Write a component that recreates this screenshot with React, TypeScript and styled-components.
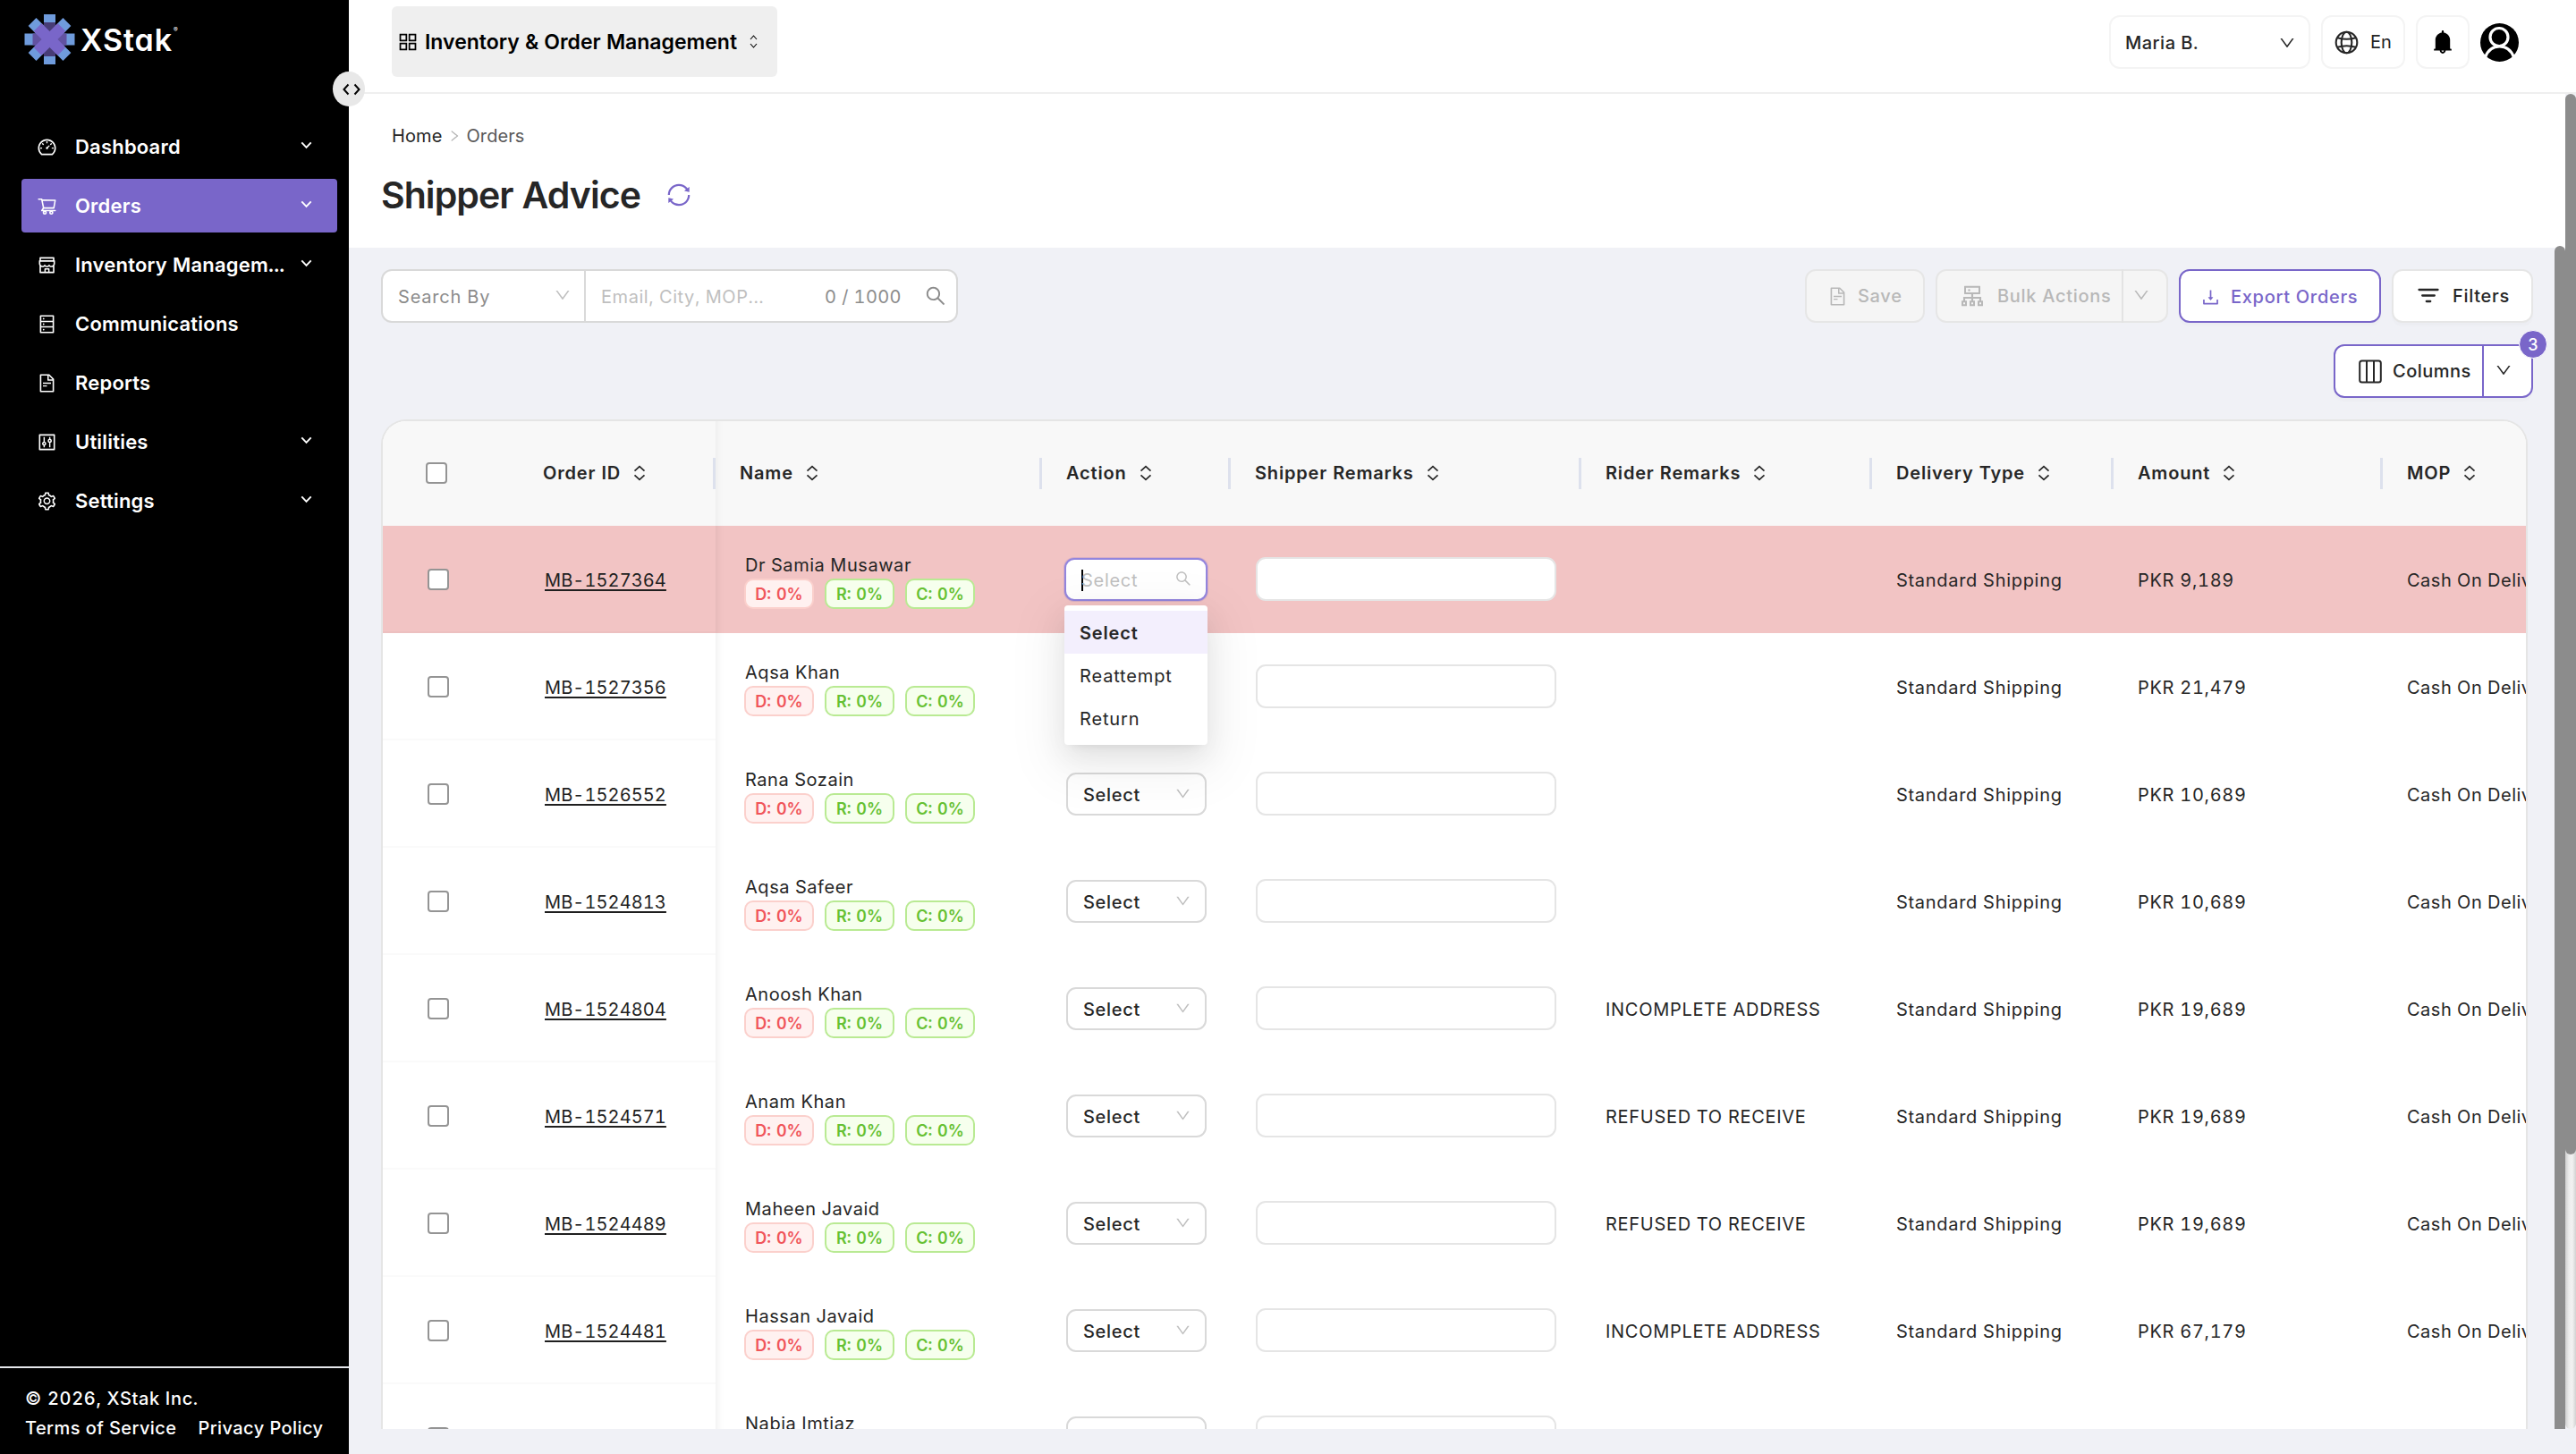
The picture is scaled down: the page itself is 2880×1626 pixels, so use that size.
import { ReactNode, useState } from 'react';
import {
	AiFillBell,
	AiOutlineAppstore,
	AiOutlineCluster,
	AiOutlineControl,
	AiOutlineDashboard,
	AiOutlineDatabase,
	AiOutlineDown,
	AiOutlineDownload,
	AiOutlineFileText,
	AiOutlineRight,
	AiOutlineSearch,
	AiOutlineSetting,
	AiOutlineShop,
	AiOutlineShoppingCart,
	AiOutlineSync,
} from 'react-icons/ai';
import styled, { createGlobalStyle, css } from 'styled-components';

const PURPLE = '#7966c9';
const TABLE_COLUMNS = '154px 218px 365px 211px 392px 325px 270px 301px 301px';

const GlobalStyle = createGlobalStyle`
	*, *::before, *::after {
		box-sizing: border-box;
	}
	body {
		margin: 0;
		background: #f0f1f6;
		color: #262626;
		font-family: Inter, 'Liberation Sans', sans-serif;
		font-size: 20px;
		font-variant-numeric: tabular-nums;
		overflow: hidden;
	}
	button, input {
		font: inherit;
		letter-spacing: inherit;
		color: inherit;
	}
	svg {
		display: block;
		flex: none;
	}
`;

const StyledLayout = styled.div`
	display: flex;
	height: 1626px;
`;

/* sidebar */
const StyledSidebar = styled.aside`
	position: relative;
	display: flex;
	flex-direction: column;
	width: 390px;
	flex: none;
	background: #000;
	color: #fff;
`;
const StyledLogo = styled.div`
	display: flex;
	align-items: center;
	height: 88px;
	padding-left: 27px;
`;
const StyledLogoText = styled.span`
	margin-left: 6px;
	font-size: 34px;
	font-weight: 600;
	letter-spacing: 0.9px;
	font-feature-settings: 'cv11';
`;
const StyledLogoMark = styled.sup`
	align-self: flex-start;
	margin: 29px 0 0 1px;
	font-size: 7px;
	line-height: 9px;
`;
const StyledCollapse = styled.button`
	position: absolute;
	top: 80px;
	right: -18px;
	display: flex;
	align-items: center;
	justify-content: center;
	width: 36px;
	height: 39px;
	padding: 0 0 0 5px;
	border: 0;
	border-radius: 50%;
	background: #e8e8e8;
	color: #000;
`;
const StyledMenu = styled.ul`
	display: flex;
	flex-direction: column;
	flex: 1;
	gap: 6px;
	margin: 46px 13px 0 24px;
	padding: 0;
	list-style: none;
`;
const StyledMenuItem = styled.li<{ $active?: boolean }>`
	display: flex;
	align-items: center;
	height: 60px;
	padding: 0 28px 0 17px;
	border-radius: 4px;
	background: ${({ $active }) => ($active ? PURPLE : 'transparent')};
	font-size: 22px;
	font-weight: 600;
	letter-spacing: 0.2px;
`;
const StyledMenuLabel = styled.span`
	flex: 1;
	margin-left: 20px;
	white-space: nowrap;
`;
const StyledMenuArrow = styled.svg`
	margin-bottom: 4px;
`;
const StyledSidebarFooter = styled.footer`
	display: grid;
	grid-template-columns: auto 1fr;
	column-gap: 24px;
	height: 98px;
	padding: 18px 28px 0;
	border-top: 2px solid #e5e7eb;
	font-weight: 500;
	line-height: 33px;
	letter-spacing: 0.42px;
	align-content: start;
	white-space: nowrap;
`;
const StyledCopyright = styled.span`
	grid-column: 1 / -1;
	letter-spacing: 0.65px;
`;

/* top bar */
const StyledMain = styled.main`
	display: flex;
	flex-direction: column;
	flex: 1;
	min-width: 0;
`;
const StyledTopBar = styled.header`
	display: flex;
	align-items: flex-start;
	justify-content: space-between;
	height: 105px;
	padding: 7px 64px 0 48px;
	border-bottom: 2px solid #efefef;
	background: #fff;
`;
const StyledModule = styled.button`
	display: flex;
	align-items: center;
	width: 431px;
	height: 79px;
	padding: 0 0 0 5px;
	border: 0;
	border-radius: 6px;
	background: #efefef;
	color: #000;
	font-size: 23px;
	font-weight: 600;
`;
const StyledModuleLabel = styled.span`
	margin: 0 14px 0 6px;
`;
const StyledTopActions = styled.div`
	display: flex;
	align-items: center;
	gap: 12px;
	padding-top: 10px;
`;
const StyledTopBox = styled.div<{ $width: number }>`
	display: flex;
	align-items: center;
	justify-content: center;
	width: ${({ $width }) => $width}px;
	height: 60px;
	border: 2px solid #f4f4f4;
	border-radius: 12px;
	letter-spacing: 0.5px;
`;
const StyledUserBox = styled(StyledTopBox)`
	justify-content: space-between;
	padding: 1px 14px 0 16px;
	font-weight: 500;
`;
const StyledLanguage = styled.span`
	margin-left: 13px;
	letter-spacing: 0;
`;

/* page */
const StyledBody = styled.div`
	display: flex;
	height: 1493px;
`;
const StyledContent = styled.div`
	flex: 1;
	min-width: 0;
`;
const StyledPageHead = styled.div`
	height: 172px;
	padding: 35px 36px 0;
	background: #fff;
`;
const StyledBreadcrumb = styled.nav`
	display: flex;
	align-items: center;
	height: 24px;
	padding-left: 12px;
	letter-spacing: 0.1px;
`;
const StyledCrumb = styled.span<{ $current?: boolean }>`
	color: ${({ $current }) => ($current ? '#595959' : '#262626')};
`;
const StyledCrumbArrow = styled(AiOutlineRight)`
	margin: 0 5px 0 6px;
	color: #b5b5b5;
`;
const StyledTitleRow = styled.div`
	display: flex;
	align-items: center;
	height: 50px;
	margin-top: 29px;
`;
const StyledTitle = styled.h1`
	margin: 0 28px 0 0;
	font-size: 41px;
	font-weight: 600;
	letter-spacing: -0.95px;
`;
const StyledPanel = styled.div`
	display: flex;
	height: 1321px;
`;
const StyledPanelInner = styled.div`
	display: flex;
	flex-direction: column;
	flex: 1;
	min-width: 0;
	padding: 24px 24px 0 36px;
`;
const StyledInnerScroll = styled.div`
	width: 12px;
	margin-top: -2px;
	border-radius: 6px 6px 0 0;
	background: #8c8c8c;
`;
const StyledOuterTrack = styled.div`
	width: 12px;
	border-radius: 6px;
	background: linear-gradient(90deg, #cfcfcf, #ededed 35%, #f2f2f2 65%, #d2d2d2);
`;
const StyledOuterThumb = styled.div`
	height: 1186px;
	border-radius: 6px;
	background: #8c8c8c;
`;

/* toolbar */
const StyledToolbar = styled.div`
	display: flex;
	justify-content: space-between;
	height: 60px;
`;
const StyledSearch = styled.div`
	display: flex;
	align-items: center;
	width: 645px;
	border: 2px solid #d9d9d9;
	border-radius: 12px;
	background: #fff;
	color: #8c8c8c;
`;
const StyledSearchBy = styled.div`
	display: flex;
	align-items: center;
	justify-content: space-between;
	width: 227px;
	height: 100%;
	padding: 1px 14px 0 17px;
	border-right: 2px solid #d9d9d9;
	letter-spacing: 0.8px;

	svg {
		margin-bottom: 3px;
		color: #bfbfbf;
	}
`;
const StyledSearchInput = styled.input`
	flex: 1;
	min-width: 0;
	padding: 2px 0 0 17px;
	border: 0;
	outline: 0;
	background: transparent;
	letter-spacing: 0.55px;

	&::placeholder {
		color: #bfbfbf;
	}
`;
const StyledCounter = styled.span`
	margin-right: 25px;
	padding-top: 2px;
	letter-spacing: 0.4px;
`;
const StyledSearchIcon = styled(AiOutlineSearch)`
	margin-right: 10px;
`;
const StyledActions = styled.div`
	display: flex;
	gap: 12px;
`;
const StyledButton = styled.button<{ $tone?: 'disabled' | 'outline'; $width: number }>`
	display: flex;
	align-items: center;
	gap: 11px;
	width: ${({ $width }) => $width}px;
	height: 60px;
	padding: 0 0 0 23px;
	border: 2px solid #e6e6e6;
	border-radius: 12px;
	background: #fff;
	font-weight: 500;
	letter-spacing: 0.7px;
	white-space: nowrap;
	box-shadow: 0 4px 2px rgba(0, 0, 0, 0.016);

	${({ $tone }) =>
		$tone === 'disabled' &&
		css`
			background: #f5f5f5;
			color: #b8b8b8;
			box-shadow: none;
		`}
	${({ $tone }) =>
		$tone === 'outline' &&
		css`
			padding: 2px 0 0 22px;
			border-color: ${PURPLE};
			color: ${PURPLE};
		`}
`;
const StyledFilterButton = styled(StyledButton)`
	padding-left: 27px;
	gap: 15px;
`;
const StyledSplitButton = styled(StyledButton)`
	gap: 12px;
`;
const StyledSplitArrow = styled.span<{ $outlined?: boolean }>`
	display: flex;
	align-items: center;
	justify-content: center;
	width: ${({ $outlined }) => ($outlined ? 55 : 53)}px;
	height: 60px;
	margin: -2px 0 -2px auto;
	padding: 0 9px 3px 0;
	border-left: 2px solid ${({ $outlined }) => ($outlined ? PURPLE : '#e3e3e3')};
`;
const StyledColumnsRow = styled.div`
	display: flex;
	justify-content: flex-end;
	margin: 24px 0;
`;
const StyledColumns = styled.div`
	position: relative;
`;
const StyledColumnsButton = styled(StyledSplitButton)`
	padding-left: 26px;
	border-color: ${PURPLE};
	letter-spacing: 0.5px;
`;
const StyledBadge = styled.span`
	position: absolute;
	top: -16px;
	right: -16px;
	width: 32px;
	height: 32px;
	border: 1px solid #fff;
	border-radius: 50%;
	background: ${PURPLE};
	color: #fff;
	font-size: 18px;
	font-weight: 500;
	line-height: 31px;
	text-align: center;
`;

/* table */
const StyledTable = styled.div`
	flex: 1;
	min-height: 0;
	width: 2400px;
	overflow: hidden;
	border: 2px solid #e5e5e5;
	border-bottom: 0;
	border-radius: 28px 28px 0 0;
	background: #fff;
	letter-spacing: 0.7px;
`;
const StyledHeadRow = styled.div`
	display: grid;
	grid-template-columns: ${TABLE_COLUMNS};
	height: 117px;
	background: #f8f8f8;
	font-weight: 600;
	letter-spacing: 0.82px;
`;
const StyledRow = styled.div<{ $highlight: boolean }>`
	display: grid;
	grid-template-columns: ${TABLE_COLUMNS};
	height: 120px;
	background: ${({ $highlight }) => ($highlight ? '#f2c4c4' : '#fff')};
`;
const StyledCell = styled.div`
	position: relative;
	display: flex;
	align-items: center;
	padding: 2px 0 0 27px;
	white-space: nowrap;
`;
const StyledHeadCell = styled(StyledCell)`
	gap: 14px;
	padding: 0 0 2px 27px;

	&::after {
		content: '';
		position: absolute;
		top: 41px;
		right: 0;
		width: 3px;
		height: 35px;
		background: #dde1ed;
	}
`;
const StyledOrderHead = styled(StyledHeadCell)`
	padding-left: 25px;
`;
const StyledCheckCell = styled(StyledCell)<{ $head?: boolean }>`
	padding: ${({ $head }) => ($head ? '0 0 2px 48px' : '2px 0 0 50px')};
	border-bottom: ${({ $head }) => ($head ? '0' : '2px solid rgba(0, 0, 0, 0.02)')};
`;
const StyledCheckbox = styled.input`
	appearance: none;
	width: 24px;
	height: 24px;
	margin: 0;
	border: 2.5px solid #949494;
	border-radius: 4px;
	background: #fff;
`;
const StyledOrderCell = styled(StyledCell)`
	padding: 3px 0 0 27px;
	border-bottom: 2px solid rgba(0, 0, 0, 0.02);
`;
const StyledNameCell = styled(StyledCell)`
	flex-direction: column;
	align-items: flex-start;
	padding: 32px 0 0 33px;
	box-shadow: inset 12px 0 8px -10px rgba(0, 0, 0, 0.07);
`;
const StyledNameHead = styled(StyledHeadCell)`
	box-shadow: inset 12px 0 8px -10px rgba(0, 0, 0, 0.05);
`;
const StyledMopCell = styled(StyledCell)`
	letter-spacing: 0.5px;
`;
const StyledOrderLink = styled.a`
	color: #1f1f1f;
	letter-spacing: 0.1px;
	text-decoration: underline;
	text-decoration-thickness: 2px;
	text-underline-offset: 3px;
`;
const StyledName = styled.span`
	line-height: 24px;
	letter-spacing: 0.55px;
`;
const StyledTags = styled.div`
	display: flex;
	gap: 12px;
	margin: 3px 0 0 -1px;
`;
const StyledTag = styled.span<{ $danger?: boolean }>`
	width: 78px;
	height: 34px;
	border: 2px solid ${({ $danger }) => ($danger ? '#fbd0cc' : '#b9ea93')};
	border-radius: 10px;
	background: ${({ $danger }) => ($danger ? '#fff1f0' : '#f6ffed')};
	color: ${({ $danger }) => ($danger ? '#f0555a' : '#66c133')};
	font-size: 18px;
	font-weight: 600;
	line-height: 31px;
	letter-spacing: 0;
	word-spacing: 1px;
	text-align: center;
`;
const StyledSelect = styled.div<{ $open: boolean }>`
	display: flex;
	align-items: center;
	justify-content: space-between;
	width: 157px;
	height: 48px;
	margin-bottom: 2px;
	padding: 1px 15px 0 17px;
	border: 2px solid #d9d9d9;
	border-radius: 11px;
	background: #fff;
	font-weight: 500;

	svg {
		margin-bottom: 3px;
		color: #bfbfbf;
	}

	${({ $open }) =>
		$open &&
		css`
			width: 160px;
			margin-left: -2px;
			border-color: #9385dd;
			box-shadow: 0 0 0 1px rgba(121, 102, 201, 0.22);
			color: #bfbfbf;
			font-weight: 400;
		`}
`;
const StyledCaret = styled.span`
	width: 2px;
	height: 24px;
	margin-right: -2px;
	background: #000;
`;
const StyledSelectText = styled.span`
	flex: 1;
`;
const StyledDropdown = styled.ul`
	position: absolute;
	z-index: 2;
	top: 89px;
	left: 25px;
	width: 160px;
	height: 156px;
	margin: 0;
	padding: 6px 0 0;
	border-radius: 4px;
	background: #fff;
	box-shadow: 0 6px 12px -8px rgba(0, 0, 0, 0.12), 0 12px 32px rgba(0, 0, 0, 0.08),
		0 18px 56px 16px rgba(0, 0, 0, 0.05);
	list-style: none;
`;
const StyledOption = styled.li<{ $selected: boolean }>`
	height: 48px;
	padding-left: 17px;
	background: ${({ $selected }) => ($selected ? '#f3effd' : '#fff')};
	font-weight: ${({ $selected }) => ($selected ? 600 : 400)};
	line-height: 50px;
	letter-spacing: 0.85px;
`;
const StyledRemarks = styled.input`
	width: 336px;
	height: 49px;
	margin: 0 0 3px 1px;
	padding: 0 16px;
	border: 2px solid #e5e5e5;
	border-radius: 11px;
	background: #fff;
	outline: 0;
`;

interface MenuEntry {
	label: string;
	icon: ReactNode;
	expandable?: boolean;
}

const menu: MenuEntry[] = [
	{ label: 'Dashboard', icon: <AiOutlineDashboard size={23} />, expandable: true },
	{ label: 'Orders', icon: <AiOutlineShoppingCart size={23} />, expandable: true },
	{ label: 'Inventory Managem...', icon: <AiOutlineShop size={23} />, expandable: true },
	{ label: 'Communications', icon: <AiOutlineDatabase size={23} /> },
	{ label: 'Reports', icon: <AiOutlineFileText size={23} /> },
	{ label: 'Utilities', icon: <AiOutlineControl size={23} />, expandable: true },
	{ label: 'Settings', icon: <AiOutlineSetting size={23} />, expandable: true },
];

const headers = ['Action', 'Shipper Remarks', 'Rider Remarks', 'Delivery Type', 'Amount', 'MOP'];

interface Order {
	id: string;
	name: string;
	remarks: string;
	amount: string;
}

const orders: Order[] = [
	{ id: 'MB-1527364', name: 'Dr Samia Musawar', remarks: '', amount: 'PKR 9,189' },
	{ id: 'MB-1527356', name: 'Aqsa Khan', remarks: '', amount: 'PKR 21,479' },
	{ id: 'MB-1526552', name: 'Rana Sozain', remarks: '', amount: 'PKR 10,689' },
	{ id: 'MB-1524813', name: 'Aqsa Safeer', remarks: '', amount: 'PKR 10,689' },
	{ id: 'MB-1524804', name: 'Anoosh Khan', remarks: 'INCOMPLETE ADDRESS', amount: 'PKR 19,689' },
	{ id: 'MB-1524571', name: 'Anam Khan', remarks: 'REFUSED TO RECEIVE', amount: 'PKR 19,689' },
	{ id: 'MB-1524489', name: 'Maheen Javaid', remarks: 'REFUSED TO RECEIVE', amount: 'PKR 19,689' },
	{ id: 'MB-1524481', name: 'Hassan Javaid', remarks: 'INCOMPLETE ADDRESS', amount: 'PKR 67,179' },
	{ id: '', name: 'Nabia Imtiaz', remarks: '', amount: '' },
];

const options = ['Select', 'Reattempt', 'Return'];

function LogoIcon() {
	return (
		<svg width="57" height="56" viewBox="-28.5 -28 57 56">
			<g fill="#6f9bdc">
				<rect x="-6.5" y="-28" width="13" height="56" />
				<rect x="-28" y="-6.5" width="56" height="13" />
				<rect x="-6.3" y="-27.5" width="12.6" height="55" transform="rotate(45)" />
				<rect x="-6.3" y="-27.5" width="12.6" height="55" transform="rotate(-45)" />
			</g>
			<rect x="-6.5" y="-19" width="13" height="38" fill="#483c76" />
			<rect x="-19" y="-6.5" width="38" height="13" fill="#6252a1" />
			<g fill="#7966c9">
				<rect x="-6.3" y="-19" width="12.6" height="38" transform="rotate(45)" />
				<rect x="-6.3" y="-19" width="12.6" height="38" transform="rotate(-45)" />
			</g>
		</svg>
	);
}

function SortIcon() {
	return (
		<svg width="14" height="18" viewBox="0 0 14 18" fill="none" stroke="currentColor" strokeWidth="1.7">
			<path d="M1.5 6.6L7 1.6L12.5 6.6M1.5 11.4L7 16.4L12.5 11.4" />
		</svg>
	);
}

function SwitchIcon() {
	return (
		<svg width="9" height="15" viewBox="0 0 9 15" fill="none" stroke="currentColor" strokeWidth="1.1">
			<path d="M1 5L4.5 1L8 5M1 10L4.5 14L8 10" />
		</svg>
	);
}

function GlobeIcon() {
	return (
		<svg width="27" height="27" viewBox="0 0 27 27" fill="none" stroke="currentColor" strokeWidth="2.1">
			<circle cx="13.5" cy="13.5" r="11.8" />
			<ellipse cx="13.5" cy="13.5" rx="5.8" ry="11.8" />
			<path d="M3.2 8.2Q13.5 11.4 23.8 8.2M3.2 18.8Q13.5 15.6 23.8 18.8" />
		</svg>
	);
}

function AvatarIcon() {
	return (
		<svg width="43" height="43" viewBox="0 0 43 43">
			<circle cx="21.5" cy="21.5" r="21.5" fill="#000" />
			<circle cx="21" cy="15.5" r="10" fill="none" stroke="#fff" strokeWidth="3.2" />
			<path d="M5.5 38Q10 26 21.5 26Q33 26 37.5 38" fill="none" stroke="#fff" strokeWidth="3.2" />
		</svg>
	);
}

function FilterIcon() {
	return (
		<svg width="24" height="20" viewBox="0 0 24 20" stroke="currentColor" strokeWidth="2.3" strokeLinecap="round">
			<path d="M1.5 3H22.5M5.2 9.5H18.8M9.8 16H14.2" />
		</svg>
	);
}

function ColumnsIcon() {
	return (
		<svg width="26" height="27" viewBox="0 0 26 27" fill="none" stroke="currentColor" strokeWidth="2">
			<rect x="1.2" y="1.5" width="23.6" height="24" rx="2.5" />
			<path d="M9 1.5V25.5M17 1.5V25.5" />
		</svg>
	);
}

function Sidebar() {
	return (
		<StyledSidebar>
			<StyledLogo>
				<LogoIcon />
				<StyledLogoText>XStak</StyledLogoText>
				<StyledLogoMark>®</StyledLogoMark>
			</StyledLogo>
			<StyledCollapse type="button">
				<svg width="20" height="14" viewBox="0 0 20 14" fill="none" stroke="currentColor" strokeWidth="2">
					<path d="M6.5 1.5L1.5 7L6.5 12.5M13.5 1.5L18.5 7L13.5 12.5" />
				</svg>
			</StyledCollapse>
			<StyledMenu>
				{menu.map(({ label, icon, expandable }) => (
					<StyledMenuItem key={label} $active={label === 'Orders'}>
						{icon}
						<StyledMenuLabel>{label}</StyledMenuLabel>
						{expandable && (
							<StyledMenuArrow width="13" height="9" viewBox="0 0 14 10" fill="none" stroke="currentColor" strokeWidth="2.1">
								<path d="M1.2 1.5L7 7.6L12.8 1.5" />
							</StyledMenuArrow>
						)}
					</StyledMenuItem>
				))}
			</StyledMenu>
			<StyledSidebarFooter>
				<StyledCopyright>© 2026, XStak Inc.</StyledCopyright>
				<span>Terms of Service</span>
				<span>Privacy Policy</span>
			</StyledSidebarFooter>
		</StyledSidebar>
	);
}

function TopBar() {
	return (
		<StyledTopBar>
			<StyledModule type="button">
				<AiOutlineAppstore size={26} />
				<StyledModuleLabel>Inventory &amp; Order Management</StyledModuleLabel>
				<SwitchIcon />
			</StyledModule>
			<StyledTopActions>
				<StyledUserBox $width={225}>
					Maria B.
					<AiOutlineDown size={20} />
				</StyledUserBox>
				<StyledTopBox $width={94}>
					<GlobeIcon />
					<StyledLanguage>En</StyledLanguage>
				</StyledTopBox>
				<StyledTopBox $width={60}>
					<AiFillBell size={30} color="#000" />
				</StyledTopBox>
				<AvatarIcon />
			</StyledTopActions>
		</StyledTopBar>
	);
}

function Toolbar() {
	return (
		<>
			<StyledToolbar>
				<StyledSearch>
					<StyledSearchBy>
						Search By
						<AiOutlineDown size={20} />
					</StyledSearchBy>
					<StyledSearchInput placeholder="Email, City, MOP..." />
					<StyledCounter>0 / 1000</StyledCounter>
					<StyledSearchIcon size={26} />
				</StyledSearch>
				<StyledActions>
					<StyledButton type="button" $tone="disabled" $width={134}>
						<AiOutlineFileText size={23} />
						Save
					</StyledButton>
					<StyledSplitButton type="button" $tone="disabled" $width={260}>
						<AiOutlineCluster size={32} />
						Bulk Actions
						<StyledSplitArrow>
							<AiOutlineDown size={20} />
						</StyledSplitArrow>
					</StyledSplitButton>
					<StyledButton type="button" $tone="outline" $width={226}>
						<AiOutlineDownload size={23} />
						Export Orders
					</StyledButton>
					<StyledFilterButton type="button" $width={158}>
						<FilterIcon />
						Filters
					</StyledFilterButton>
				</StyledActions>
			</StyledToolbar>
			<StyledColumnsRow>
				<StyledColumns>
					<StyledColumnsButton type="button" $width={223}>
						<ColumnsIcon />
						Columns
						<StyledSplitArrow $outlined>
							<AiOutlineDown size={20} />
						</StyledSplitArrow>
					</StyledColumnsButton>
					<StyledBadge>3</StyledBadge>
				</StyledColumns>
			</StyledColumnsRow>
		</>
	);
}

interface OrderRowProps extends Order {
	open: boolean;
	onToggle: () => void;
}

function OrderRow({ id, name, remarks, amount, open, onToggle }: OrderRowProps) {
	return (
		<StyledRow $highlight={id === orders[0].id}>
			<StyledCheckCell>
				<StyledCheckbox type="checkbox" />
			</StyledCheckCell>
			<StyledOrderCell>
				<StyledOrderLink>{id}</StyledOrderLink>
			</StyledOrderCell>
			<StyledNameCell>
				<StyledName>{name}</StyledName>
				<StyledTags>
					<StyledTag $danger>D: 0%</StyledTag>
					<StyledTag>R: 0%</StyledTag>
					<StyledTag>C: 0%</StyledTag>
				</StyledTags>
			</StyledNameCell>
			<StyledCell>
				<StyledSelect $open={open} onClick={onToggle}>
					{open && <StyledCaret />}
					<StyledSelectText>Select</StyledSelectText>
					{open ? <AiOutlineSearch size={20} /> : <AiOutlineDown size={19} />}
				</StyledSelect>
				{open && (
					<StyledDropdown>
						{options.map((option) => (
							<StyledOption key={option} $selected={option === 'Select'}>
								{option}
							</StyledOption>
						))}
					</StyledDropdown>
				)}
			</StyledCell>
			<StyledCell>
				<StyledRemarks />
			</StyledCell>
			<StyledCell>{remarks}</StyledCell>
			<StyledCell>Standard Shipping</StyledCell>
			<StyledCell>{amount}</StyledCell>
			<StyledMopCell>Cash On Delivery</StyledMopCell>
		</StyledRow>
	);
}

export default function App() {
	const [openRow, setOpenRow] = useState<number | null>(0);

	return (
		<>
			<GlobalStyle />
			<StyledLayout>
				<Sidebar />
				<StyledMain>
					<TopBar />
					<StyledBody>
						<StyledContent>
							<StyledPageHead>
								<StyledBreadcrumb>
									<StyledCrumb>Home</StyledCrumb>
									<StyledCrumbArrow size={16} />
									<StyledCrumb $current>Orders</StyledCrumb>
								</StyledBreadcrumb>
								<StyledTitleRow>
									<StyledTitle>Shipper Advice</StyledTitle>
									<AiOutlineSync size={30} color={PURPLE} />
								</StyledTitleRow>
							</StyledPageHead>
							<StyledPanel>
								<StyledPanelInner>
									<Toolbar />
									<StyledTable>
										<StyledHeadRow>
											<StyledCheckCell $head>
												<StyledCheckbox type="checkbox" />
											</StyledCheckCell>
											<StyledOrderHead>
												Order ID <SortIcon />
											</StyledOrderHead>
											<StyledNameHead>
												Name <SortIcon />
											</StyledNameHead>
											{headers.map((header) => (
												<StyledHeadCell key={header}>
													{header} <SortIcon />
												</StyledHeadCell>
											))}
										</StyledHeadRow>
										{orders.map((order, index) => (
											<OrderRow
												key={`order-${index}`}
												{...order}
												open={openRow === index}
												onToggle={() => setOpenRow(openRow === index ? null : index)}
											/>
										))}
									</StyledTable>
								</StyledPanelInner>
								<StyledInnerScroll />
							</StyledPanel>
						</StyledContent>
						<StyledOuterTrack>
							<StyledOuterThumb />
						</StyledOuterTrack>
					</StyledBody>
				</StyledMain>
			</StyledLayout>
		</>
	);
}
